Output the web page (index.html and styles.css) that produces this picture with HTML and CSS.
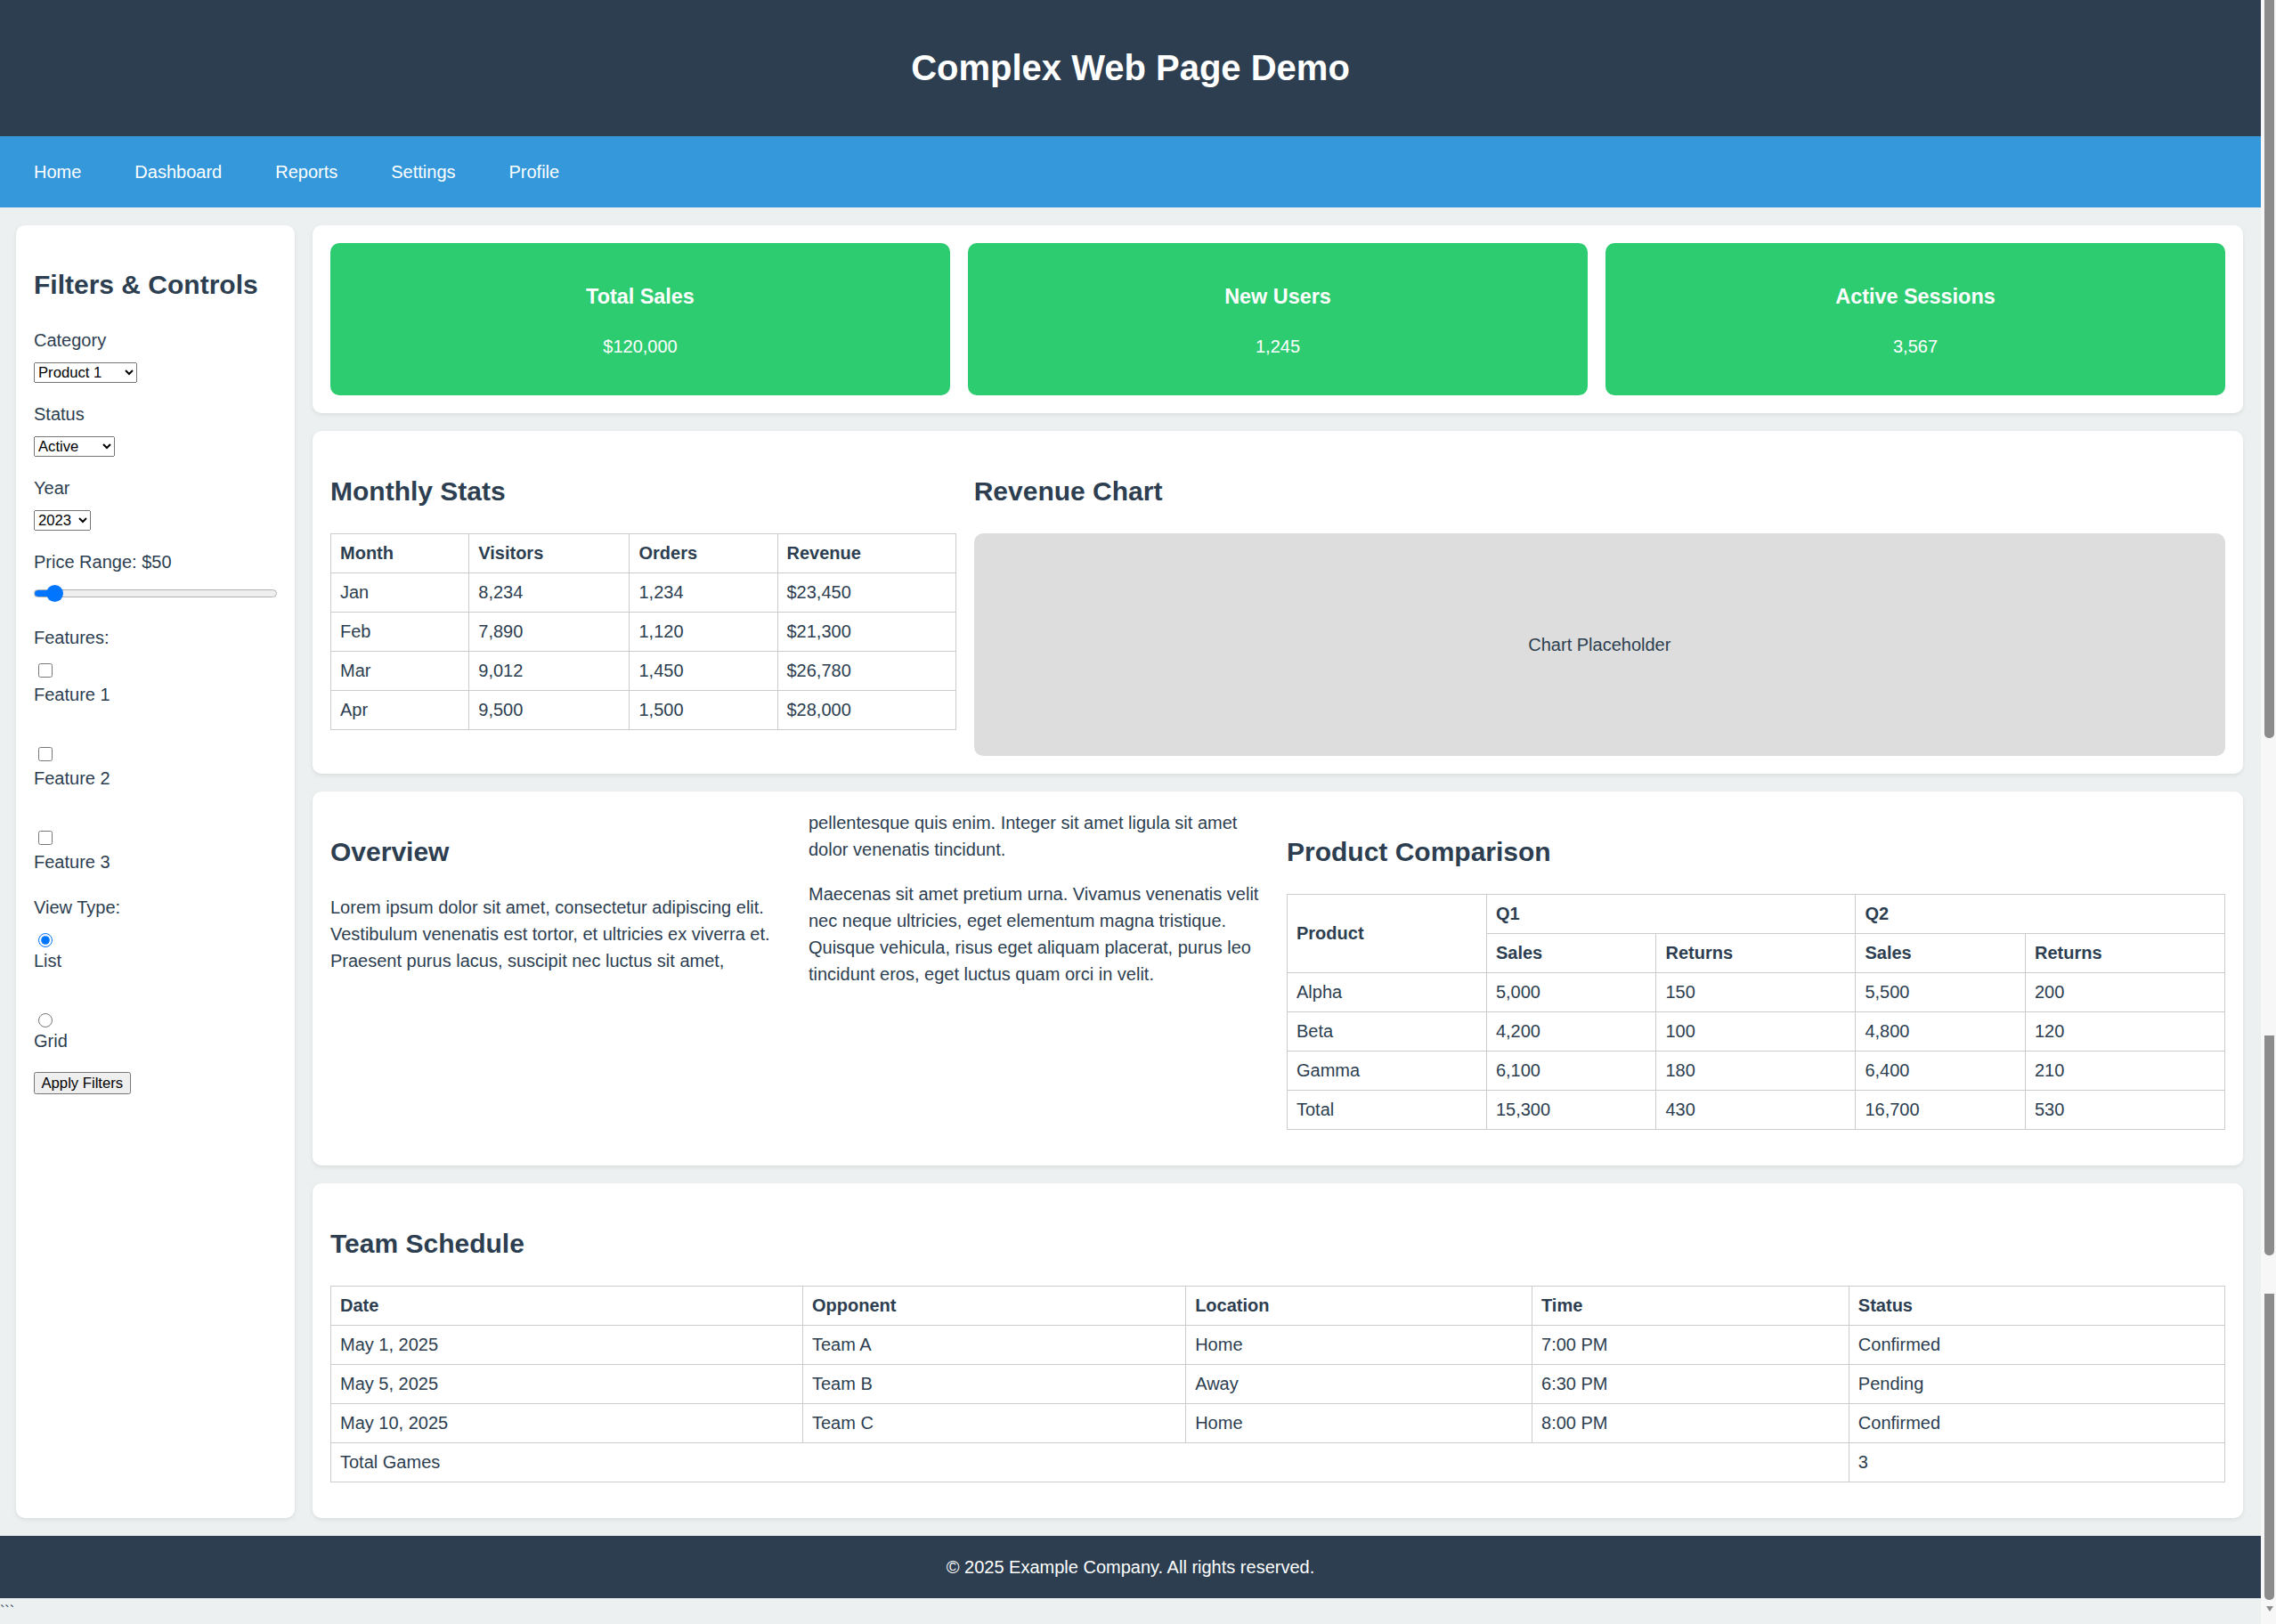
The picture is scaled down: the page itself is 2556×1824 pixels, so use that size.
FILE: index.html
```html
<!DOCTYPE html>
<html lang="en">
<head>
<meta charset="utf-8">
<title>Complex Web Page Demo</title>
<link rel="stylesheet" href="styles.css">
</head>
<body>
<div class="page">
  <header class="site-header">
    <h1>Complex Web Page Demo</h1>
  </header>
  <nav class="site-nav">
    <ul class="nav-list">
      <li><a href="#">Home</a></li>
      <li><a href="#">Dashboard</a></li>
      <li><a href="#">Reports</a></li>
      <li><a href="#">Settings</a></li>
      <li><a href="#">Profile</a></li>
    </ul>
  </nav>
  <div class="layout">
    <aside class="sidebar">
      <h2>Filters &amp; Controls</h2>
      <div class="group">
        <label class="group-label" for="category">Category</label>
        <select id="category" class="select select-category">
          <option>Product 1</option>
          <option>Product 2</option>
          <option>Product 3</option>
        </select>
      </div>
      <div class="group">
        <label class="group-label" for="status">Status</label>
        <select id="status" class="select select-status">
          <option>Active</option>
          <option>Inactive</option>
        </select>
      </div>
      <div class="group">
        <label class="group-label" for="year">Year</label>
        <select id="year" class="select select-year">
          <option>2023</option>
          <option>2024</option>
          <option>2025</option>
        </select>
      </div>
      <div class="group">
        <label class="group-label" for="price">Price Range: $50</label>
        <input id="price" class="range" type="range" min="0" max="1000" value="50">
      </div>
      <div class="group group-features">
        <span class="group-label">Features:</span>
        <div class="option"><input type="checkbox" id="f1"><label for="f1">Feature 1</label></div>
        <div class="option"><input type="checkbox" id="f2"><label for="f2">Feature 2</label></div>
        <div class="option"><input type="checkbox" id="f3"><label for="f3">Feature 3</label></div>
      </div>
      <div class="group">
        <span class="group-label">View Type:</span>
        <div class="option radio"><input type="radio" name="view" id="v1" checked><label for="v1">List</label></div>
        <div class="option radio"><input type="radio" name="view" id="v2"><label for="v2">Grid</label></div>
      </div>
      <button class="btn" type="button">Apply Filters</button>
    </aside>

    <main class="content">
      <section class="panel">
        <div class="stats">
          <div class="stat">
            <h3>Total Sales</h3>
            <p>$120,000</p>
          </div>
          <div class="stat">
            <h3>New Users</h3>
            <p>1,245</p>
          </div>
          <div class="stat">
            <h3>Active Sessions</h3>
            <p>3,567</p>
          </div>
        </div>
      </section>

      <section class="panel split-1-2">
        <div>
          <h2>Monthly Stats</h2>
          <table class="data-table">
            <thead>
              <tr><th>Month</th><th>Visitors</th><th>Orders</th><th>Revenue</th></tr>
            </thead>
            <tbody>
              <tr><td>Jan</td><td>8,234</td><td>1,234</td><td>$23,450</td></tr>
              <tr><td>Feb</td><td>7,890</td><td>1,120</td><td>$21,300</td></tr>
              <tr><td>Mar</td><td>9,012</td><td>1,450</td><td>$26,780</td></tr>
              <tr><td>Apr</td><td>9,500</td><td>1,500</td><td>$28,000</td></tr>
            </tbody>
          </table>
        </div>
        <div>
          <h2>Revenue Chart</h2>
          <div class="chart">Chart Placeholder</div>
        </div>
      </section>

      <section class="panel split-half">
        <div class="columns">
          <h2>Overview</h2>
          <p>Lorem ipsum dolor sit amet, consectetur adipiscing elit. Vestibulum venenatis est tortor, et ultricies ex viverra et. Praesent purus lacus, suscipit nec luctus sit amet, pellentesque quis enim. Integer sit amet ligula sit amet dolor venenatis tincidunt.</p>
          <p>Maecenas sit amet pretium urna. Vivamus venenatis velit nec neque ultricies, eget elementum magna tristique. Quisque vehicula, risus eget aliquam placerat, purus leo tincidunt eros, eget luctus quam orci in velit.</p>
        </div>
        <div>
          <h2>Product Comparison</h2>
          <table class="data-table">
            <thead>
              <tr><th rowspan="2">Product</th><th colspan="2">Q1</th><th colspan="2">Q2</th></tr>
              <tr><th>Sales</th><th>Returns</th><th>Sales</th><th>Returns</th></tr>
            </thead>
            <tbody>
              <tr><td>Alpha</td><td>5,000</td><td>150</td><td>5,500</td><td>200</td></tr>
              <tr><td>Beta</td><td>4,200</td><td>100</td><td>4,800</td><td>120</td></tr>
              <tr><td>Gamma</td><td>6,100</td><td>180</td><td>6,400</td><td>210</td></tr>
            </tbody>
            <tfoot>
              <tr><td>Total</td><td>15,300</td><td>430</td><td>16,700</td><td>530</td></tr>
            </tfoot>
          </table>
        </div>
      </section>

      <section class="panel">
        <h2>Team Schedule</h2>
        <table class="data-table">
          <thead>
            <tr><th>Date</th><th>Opponent</th><th>Location</th><th>Time</th><th>Status</th></tr>
          </thead>
          <tbody>
            <tr><td>May 1, 2025</td><td>Team A</td><td>Home</td><td>7:00 PM</td><td>Confirmed</td></tr>
            <tr><td>May 5, 2025</td><td>Team B</td><td>Away</td><td>6:30 PM</td><td>Pending</td></tr>
            <tr><td>May 10, 2025</td><td>Team C</td><td>Home</td><td>8:00 PM</td><td>Confirmed</td></tr>
          </tbody>
          <tfoot>
            <tr><td colspan="4">Total Games</td><td>3</td></tr>
          </tfoot>
        </table>
      </section>
    </main>
  </div>
  <footer class="site-footer">
    <p>&copy; 2025 Example Company. All rights reserved.</p>
  </footer>
  <div class="stray">```</div>
</div>
<div class="scrollbar" aria-hidden="true">
  <div class="sb-thumb sb-t1"></div>
  <div class="sb-gap sb-g1"></div>
  <div class="sb-thumb sb-t2"></div>
  <div class="sb-gap sb-g2"></div>
  <div class="sb-thumb sb-t3"></div>
  <div class="sb-arrow"></div>
</div>
</body>
</html>
```
FILE: styles.css
```css
* { box-sizing: border-box; }

html, body {
  margin: 0;
  height: 100%;
  overflow: hidden;
}

body {
  display: flex;
  font-family: "Liberation Sans", Arial, sans-serif;
  font-size: 20px;
  line-height: 1.5;
  color: #2c3e50;
  background: #ecf0f1;
}

.page {
  flex: 1;
  min-width: 0;
}

/* Header */
.site-header {
  background: #2c3e50;
  color: #fff;
  text-align: center;
  padding: 20px;
}
.site-header h1 {
  font-size: 40px;
  line-height: 60px;
  margin: 25.8px 0 26.8px;
}

/* Navigation */
.site-nav {
  background: #3498db;
  padding: 10px 18px;
}
.nav-list {
  list-style: none;
  margin: 0;
  padding: 0;
  display: flex;
  gap: 20px;
}
.nav-list a {
  display: block;
  padding: 15px 20px;
  line-height: 30px;
  color: #fff;
  text-decoration: none;
}

/* Layout */
.layout {
  display: flex;
  gap: 20px;
  padding: 20px 20px 20px 18px;
}
.sidebar {
  flex: 0 0 313px;
  background: #fff;
  border-radius: 10px;
  padding: 20px;
  box-shadow: 0 2px 5px rgba(0, 0, 0, 0.08);
}
.content {
  flex: 1;
  min-width: 0;
  display: flex;
  flex-direction: column;
  gap: 20px;
}
.panel {
  background: #fff;
  border-radius: 10px;
  padding: 20px;
  box-shadow: 0 2px 5px rgba(0, 0, 0, 0.08);
}

h2 {
  font-size: 30px;
  line-height: 45px;
  margin: 24.9px 0;
}

/* Sidebar controls */
.group {
  margin-bottom: 20px;
}
.group-features {
  margin-bottom: 21.5px;
}
.group-label {
  display: block;
  margin-bottom: 10px;
}
.select {
  display: block;
  height: 23px;
  font-family: "Liberation Sans", Arial, sans-serif;
  font-size: 16.67px;
  color: #000;
}
.select-category { width: 116px; }
.select-status { width: 91px; }
.select-year { width: 64px; }

.range {
  -webkit-appearance: none;
  appearance: none;
  display: block;
  width: 100%;
  height: 20px;
  margin: 4px 0 25px;
  background: transparent;
}
.range::-webkit-slider-runnable-track {
  height: 9px;
  border-radius: 5px;
  border: 1px solid #b2b2b2;
  background: linear-gradient(to right, #0075ff 0, #0075ff 22px, #efefef 22px);
}
.range::-webkit-slider-thumb {
  -webkit-appearance: none;
  appearance: none;
  width: 19px;
  height: 19px;
  border-radius: 50%;
  background: #0075ff;
  border: none;
  margin-top: -6px;
}

.option {
  display: flex;
  flex-direction: column;
  align-items: flex-start;
}
.option + .option {
  margin-top: 40px;
}
.option input {
  width: 16.25px;
  height: 16.25px;
  margin: 3.75px 0 3.75px 5px;
}
.option.radio input {
  margin: 3.75px 0 0 5px;
}

.btn {
  display: block;
  margin-top: 1px;
  font-family: "Liberation Sans", Arial, sans-serif;
  font-size: 16.67px;
  line-height: normal;
  padding: 1.5px 7.5px;
  border: 1px solid #767676;
  border-radius: 2.5px;
  background: #efefef;
  color: #000;
}

/* Stats */
.stats {
  display: grid;
  grid-template-columns: repeat(3, 1fr);
  gap: 20px;
}
.stat {
  background: #2ecc71;
  color: #fff;
  border-radius: 10px;
  padding: 20px;
  text-align: center;
}
.stat h3 {
  font-size: 23.4px;
  line-height: 35.1px;
  margin: 23.4px 0;
}
.stat p {
  margin: 20px 0;
}

/* Grids */
.split-1-2 {
  display: grid;
  grid-template-columns: 1fr 2fr;
  gap: 20px;
}
.split-half {
  display: grid;
  grid-template-columns: 1fr 1fr;
  gap: 20px;
}
.columns {
  column-count: 2;
  column-gap: 20px;
}
.columns p {
  margin: 20px 0;
}

.chart {
  height: 250px;
  background: #ddd;
  border-radius: 10px;
  display: flex;
  align-items: center;
  justify-content: center;
}

/* Tables */
.data-table {
  width: 100%;
  border-collapse: collapse;
  margin-bottom: 20px;
  line-height: normal;
}
.data-table th,
.data-table td {
  border: 1px solid #ccc;
  padding: 10px;
  text-align: left;
}
.data-table th {
  font-weight: bold;
}

/* Footer */
.site-footer {
  background: #2c3e50;
  color: #fff;
  text-align: center;
  padding: 20px;
}
.site-footer p {
  margin: 0;
}
.stray {
  line-height: 30px;
  font-size: 16px;
}

/* Scrollbar strip */
.scrollbar {
  flex: 0 0 17px;
  background: #f7f7f7;
  display: flex;
  flex-direction: column;
  padding: 0 2px 0 4px;
}
.sb-thumb {
  background: #8c8c8c;
  border-radius: 0 0 5px 5px;
}
.sb-t1 { height: 829px; }
.sb-g1 { height: 334px; }
.sb-t2 { height: 247px; }
.sb-g2 { height: 43px; }
.sb-t3 { height: 344px; }
.sb-arrow {
  width: 0;
  height: 0;
  margin: 7px auto 0;
  border-left: 4px solid transparent;
  border-right: 4px solid transparent;
  border-top: 6px solid #8c8c8c;
}
```
